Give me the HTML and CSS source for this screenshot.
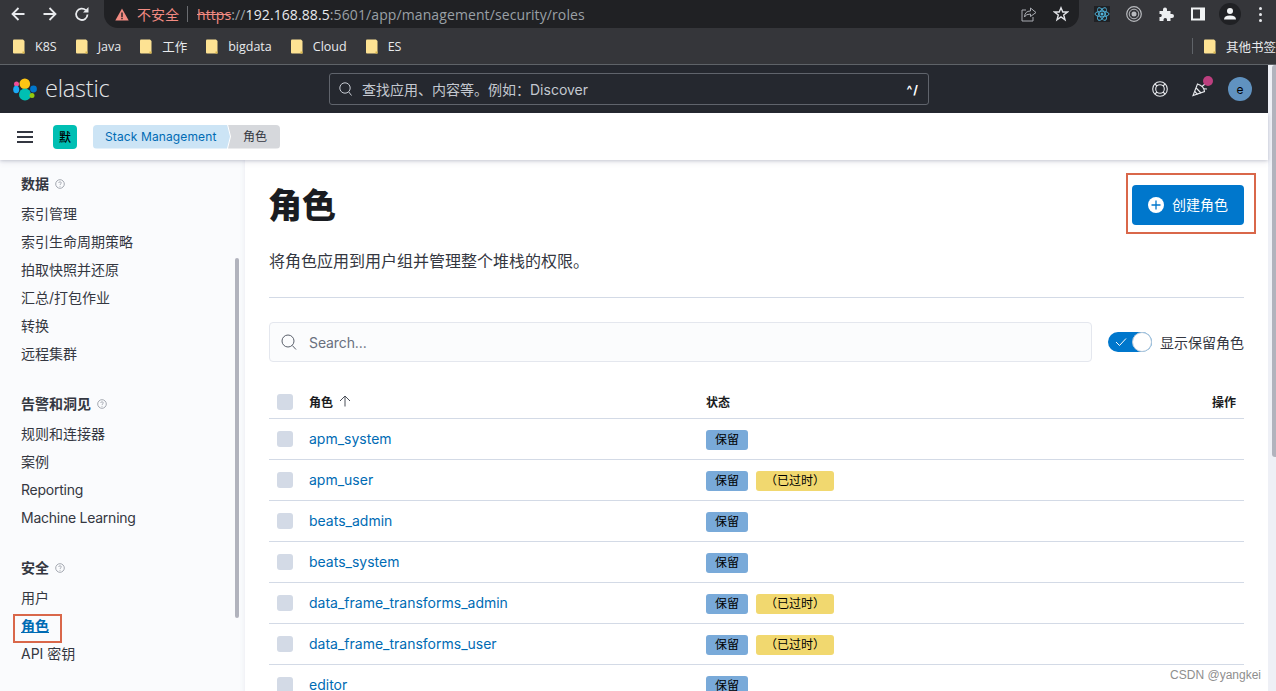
FILE: index.html
```html
<!DOCTYPE html>
<html lang="zh">
<head>
<meta charset="utf-8">
<title>角色 - Elastic</title>
<link rel="stylesheet" href="styles.css">
</head>
<body>
<svg class="defs" width="0" height="0" aria-hidden="true">
  <defs>
    <symbol id="folder" viewBox="0 0 12 15">
      <path d="M0 1.5Q0 .5 1 .5H10L11.5 2V14.5H1Q0 14.5 0 13.5Z" fill="#fde293"/>
      <path d="M9.5 14.5V12.5H11.500V14.5Z" fill="#d8b64a"/>
    </symbol>
    <symbol id="help" viewBox="0 0 10 10">
      <circle cx="5" cy="5" r="4.300" fill="none" stroke="#9a9ea8" stroke-width=".9"/>
      <path d="M3.700 4Q3.800 2.800 5 2.800T6.300 3.900C6.300 4.900 5 4.900 5 6" fill="none" stroke="#9a9ea8" stroke-width=".8"/>
      <circle cx="5" cy="7.200" r=".5" fill="#9a9ea8"/>
    </symbol>
  </defs>
</svg>

<div class="browser">
  <div class="toolbar">
    <svg class="tb-icon" viewBox="0 0 16 16"><path d="M14.500 8H2.500M8.500 2 2.500 8 8.500 14" fill="none" stroke="#e8eaed" stroke-width="1.800"/></svg>
    <svg class="tb-icon" viewBox="0 0 16 16"><path d="M1.500 8H13.500M7.500 2 13.500 8 7.500 14" fill="none" stroke="#e8eaed" stroke-width="1.800"/></svg>
    <svg class="tb-icon" viewBox="0 0 16 16"><path d="M13.500 8.500A5.700 5.700 0 1 1 11.800 4.200" fill="none" stroke="#e8eaed" stroke-width="1.800"/><path d="M9 6.500H14.500V1Z" fill="#e8eaed"/></svg>
    <div class="omnibox">
      <svg class="warn" viewBox="0 0 14 13"><path d="M7 .5 13.700 12.500H.3Z" fill="#f28b82"/><path d="M6.300 4.500H7.700V9H6.300ZM6.300 9.800H7.700V11.200H6.300Z" fill="#202124"/></svg>
      <span class="insecure">不安全</span>
      <span class="omni-sep"></span>
      <span class="url"><s class="scheme">https</s><span class="dim">://</span><span class="host">192.168.88.5</span><span class="dim">:5601/app/management/security/roles</span></span>
      <svg class="omni-share" viewBox="0 0 16 16"><path d="M9.500 2 15 6.500 9.500 10.500V8Q4.500 8 3.500 11 3.800 5 9.500 5ZM5 4H1V15H12V11" fill="none" stroke="#a9acb2" stroke-width="1"/></svg>
      <svg class="omni-star" viewBox="0 0 16 16"><path d="M8 1.800 9.800 6H14.500L10.700 8.900 12 13.700 8 10.900 4 13.700 5.300 8.900 1.500 6H6.200Z" fill="none" stroke="#e0e2e6" stroke-width="1.400"/></svg>
    </div>
    <div class="ext-group">
      <span class="ext-react"><svg viewBox="0 0 16 16"><g fill="none" stroke="#4fb4dc" stroke-width=".9"><ellipse cx="8" cy="8" rx="7" ry="2.800"/><ellipse cx="8" cy="8" rx="7" ry="2.800" transform="rotate(60 8 8)"/><ellipse cx="8" cy="8" rx="7" ry="2.800" transform="rotate(120 8 8)"/></g><circle cx="8" cy="8" r="1.500" fill="#4fb4dc"/></svg></span>
      <svg class="ext" viewBox="0 0 16 16"><g fill="none" stroke="#b9bbbf"><circle cx="8" cy="8" r="7.300" stroke-width="1.200"/><circle cx="8" cy="8" r="4.800" stroke-width="1"/></g><circle cx="8" cy="8" r="2.500" fill="#b9bbbf"/></svg>
      <svg class="ext" viewBox="0 0 16 16"><path d="M1.500 5H5V3.500A2 2 0 0 1 9 3.500V5H12.500V8H14A2 2 0 0 1 14 12H12.500V15H9V13.500A1.800 1.800 0 0 0 5.500 13.500V15H1.500V11H3A1.800 1.800 0 0 0 3 8H1.500Z" fill="#eceef0"/></svg>
      <svg class="ext" viewBox="0 0 16 16"><path d="M1 1.500H15V14.500H1ZM3 3.500V12.500H10V3.500Z" fill="#f1f3f4" fill-rule="evenodd"/></svg>
      <span class="profile"><svg viewBox="0 0 16 16"><circle cx="8" cy="5" r="3" fill="#f1f3f4"/><path d="M2 13.500Q2 9.500 8 9.500T14 13.500Z" fill="#f1f3f4"/></svg></span>
      <span class="kebab"><i></i><i></i><i></i></span>
    </div>
  </div>
  <div class="bookmarks">
    <span class="bm"><svg class="bm-icon"><use href="#folder"/></svg>K8S</span>
    <span class="bm"><svg class="bm-icon"><use href="#folder"/></svg>Java</span>
    <span class="bm"><svg class="bm-icon"><use href="#folder"/></svg>工作</span>
    <span class="bm"><svg class="bm-icon"><use href="#folder"/></svg>bigdata</span>
    <span class="bm"><svg class="bm-icon"><use href="#folder"/></svg>Cloud</span>
    <span class="bm"><svg class="bm-icon"><use href="#folder"/></svg>ES</span>
    <span class="bm-spacer"></span>
    <span class="bm-sep"></span>
    <span class="bm bm-other"><svg class="bm-icon"><use href="#folder"/></svg>其他书签</span>
  </div>
</div>

<div class="viewport">
  <div class="app">
    <header class="kbn-top">
      <div class="brand">
        <svg class="logo" viewBox="0 0 24 24">
          <circle cx="11.800" cy="6.700" r="5.300" fill="#fec514"/>
          <circle cx="12" cy="17.600" r="6" fill="#00bfb3"/>
          <circle cx="3.500" cy="7" r="2.500" fill="#f04e98"/>
          <ellipse cx="3.200" cy="12.500" rx="3" ry="3.800" fill="#1ba9f5"/>
          <ellipse cx="20.500" cy="12" rx="3.400" ry="3.400" fill="#0077cc"/>
          <circle cx="19" cy="18.500" r="2.500" fill="#93c90e"/>
        </svg>
        <span class="wordmark">elastic</span>
      </div>
      <div class="global-search">
        <svg class="gs-icon" viewBox="0 0 16 16"><circle cx="7" cy="7" r="5.200" fill="none" stroke="#c8ccd4" stroke-width="1"/><path d="M10.800 11 13.500 14.500" stroke="#c8ccd4" stroke-width="1"/></svg>
        <span class="gs-text">查找应用、内容等。例如：Discover</span>
        <span class="gs-key">^/</span>
      </div>
      <div class="top-actions">
        <svg class="ta-icon" viewBox="0 0 16 16"><g fill="none" stroke="#e8eaee" stroke-width="1.100"><circle cx="8" cy="8" r="7.300"/><circle cx="8" cy="8" r="4.300"/><path d="M2.800 2.800 5 5M13.200 2.800 11 5M2.800 13.200 5 11M13.200 13.200 11 11"/></g></svg>
        <span class="news">
          <svg class="ta-icon" viewBox="0 0 16 16"><g fill="none" stroke="#e8eaee" stroke-width="1.100"><path d="M5.500 3 1 14.500 12.500 10.500Q12 5 5.500 3Z"/><path d="M4.200 7 9 12M2.800 10.500 5.500 13.300M10 5.500 13 3M11.500 7.800 15 8"/></g></svg>
          <i class="news-dot"></i>
        </span>
        <span class="avatar">e</span>
      </div>
    </header>

    <div class="kbn-sub">
      <span class="burger"><i></i><i></i><i></i></span>
      <span class="space">默</span>
      <nav class="crumbs">
        <a class="crumb crumb-link">Stack Management</a>
        <span class="crumb crumb-current">角色</span>
      </nav>
    </div>

    <div class="body-row">
      <aside class="side">
        <div class="side-scroll"><i class="side-thumb"></i></div>
        <div class="side-inner">
          <section class="side-group">
            <h3 class="side-title">数据<svg class="help"><use href="#help"/></svg></h3>
            <a class="side-link">索引管理</a>
            <a class="side-link">索引生命周期策略</a>
            <a class="side-link">拍取快照并还原</a>
            <a class="side-link">汇总/打包作业</a>
            <a class="side-link">转换</a>
            <a class="side-link">远程集群</a>
          </section>
          <section class="side-group">
            <h3 class="side-title">告警和洞见<svg class="help"><use href="#help"/></svg></h3>
            <a class="side-link">规则和连接器</a>
            <a class="side-link">案例</a>
            <a class="side-link side-latin">Reporting</a>
            <a class="side-link side-latin">Machine Learning</a>
          </section>
          <section class="side-group">
            <h3 class="side-title">安全<svg class="help"><use href="#help"/></svg></h3>
            <a class="side-link">用户</a>
            <a class="side-link side-active">角色</a>
            <a class="side-link">API 密钥</a>
          </section>
        </div>
        <span class="mark mark-side"></span>
      </aside>

      <main class="content">
        <div class="page-head">
          <div>
            <h1 class="page-title">角色</h1>
            <p class="page-desc">将角色应用到用户组并管理整个堆栈的权限。</p>
          </div>
          <span class="create-wrap">
            <button class="create-btn" type="button">
              <svg class="plus" viewBox="0 0 16 16"><circle cx="8" cy="8" r="8" fill="#fff"/><path d="M8 3.500V12.500M3.500 8H12.500" stroke="#0077cc" stroke-width="1.300"/></svg>
              <span>创建角色</span>
            </button>
            <span class="mark mark-create"></span>
          </span>
        </div>
        <hr class="rule">
        <div class="filter-row">
          <div class="search-box">
            <svg class="search-icon" viewBox="0 0 16 16"><circle cx="7" cy="7" r="6" fill="none" stroke="#5a606b" stroke-width="1"/><path d="M11.300 11.500 15 15.500" stroke="#5a606b" stroke-width="1"/></svg>
            <span class="search-ph">Search...</span>
          </div>
          <label class="switch-wrap">
            <span class="switch">
              <svg class="switch-check" viewBox="0 0 12 10"><path d="M1 5 4.500 8.500 11 1.500" fill="none" stroke="#fff" stroke-width="1"/></svg>
              <i class="switch-knob"></i>
            </span>
            <span class="switch-label">显示保留角色</span>
          </label>
        </div>
        <div class="table">
          <div class="tr th">
            <span class="cb"></span>
            <span class="col-name"><b>角色</b><svg class="sort" viewBox="0 0 12 12"><path d="M6 11.500V1M1 6 6 1 11 6" fill="none" stroke="#4a4f58" stroke-width="1"/></svg></span>
            <span class="col-status"><b>状态</b></span>
            <span class="col-act"><b>操作</b></span>
          </div>
          <div class="tr"><span class="cb"></span><a class="col-name role">apm_system</a><span class="col-status"><span class="badge badge-blue">保留</span></span></div>
          <div class="tr"><span class="cb"></span><a class="col-name role">apm_user</a><span class="col-status"><span class="badge badge-blue">保留</span><span class="badge badge-yellow">（已过时）</span></span></div>
          <div class="tr"><span class="cb"></span><a class="col-name role">beats_admin</a><span class="col-status"><span class="badge badge-blue">保留</span></span></div>
          <div class="tr"><span class="cb"></span><a class="col-name role">beats_system</a><span class="col-status"><span class="badge badge-blue">保留</span></span></div>
          <div class="tr"><span class="cb"></span><a class="col-name role">data_frame_transforms_admin</a><span class="col-status"><span class="badge badge-blue">保留</span><span class="badge badge-yellow">（已过时）</span></span></div>
          <div class="tr"><span class="cb"></span><a class="col-name role">data_frame_transforms_user</a><span class="col-status"><span class="badge badge-blue">保留</span><span class="badge badge-yellow">（已过时）</span></span></div>
          <div class="tr"><span class="cb"></span><a class="col-name role">editor</a><span class="col-status"><span class="badge badge-blue">保留</span></span></div>
        </div>
        <span class="watermark">CSDN @yangkei</span>
      </main>
    </div>
  </div>
  <div class="page-scroll"><i class="page-thumb"></i></div>
</div>
</body>
</html>
```

FILE: styles.css
```css
* { box-sizing: border-box; }
html, body { margin: 0; height: 100%; overflow: hidden; }
body {
  display: flex;
  flex-direction: column;
  font-family: Inter, "Noto Sans CJK SC", "Liberation Sans", sans-serif;
  font-size: 14px;
  color: #343741;
  background: #fff;
}
.defs { position: absolute; }

/* browser chrome */
.browser { flex: none; background: #35363a; color: #e8eaed; }
.toolbar { height: 28px; display: flex; align-items: center; padding-left: 10px; gap: 16px; }
.tb-icon { width: 16px; height: 16px; flex: none; }
.omnibox {
  margin-left: -2px;
  width: 975px;
  height: 28px;
  background: #202124;
  border-radius: 0 0 14px 14px;
  display: flex;
  align-items: center;
  padding-left: 11px;
  flex: none;
}
.warn { width: 14px; height: 13px; flex: none; }
.insecure { margin-left: 8px; color: #f28b82; font-size: 14px; }
.omni-sep { width: 1px; height: 16px; background: #6a6c70; margin: 0 9px 0 8px; }
.url { font-size: 14px; letter-spacing: .1px; white-space: nowrap; font-family: "Open Sans", "Liberation Sans", sans-serif; }
.scheme { color: #f28b82; }
.host { color: #e8eaed; }
.dim { color: #9aa0a6; }
.omni-share { width: 16px; height: 16px; margin-left: auto; flex: none; }
.omni-star { width: 16px; height: 16px; margin: 0 10px 0 16px; flex: none; }
.ext-group { display: flex; align-items: center; flex: 1; margin-left: -1px; }
.ext-react { width: 16px; height: 16px; background: #202124; flex: none; display: flex; }
.ext-react svg { width: 16px; height: 16px; }
.ext { width: 16px; height: 16px; flex: none; margin-left: 16px; }
.profile { width: 22px; height: 22px; border-radius: 50%; background: #202124; margin-left: 13px; display: flex; align-items: center; justify-content: center; flex: none; }
.profile svg { width: 16px; height: 16px; }
.kebab { margin-left: 18px; display: flex; flex-direction: column; gap: 3px; }
.kebab i { width: 3px; height: 3px; border-radius: 50%; background: #e8eaed; display: block; }

.bookmarks {
  height: 37px;
  display: flex;
  align-items: center;
  padding: 0 0 0 13px;
  border-bottom: 1px solid #5f6368;
  font-family: "Open Sans", "Noto Sans CJK SC", sans-serif;
  font-size: 12.500px;
}
.bm { display: flex; align-items: center; white-space: nowrap; margin-right: 19px; }
.bm-icon { width: 12px; height: 15px; margin-right: 10px; flex: none; }
.bm-spacer { flex: 1; }
.bm-sep { width: 1px; height: 16px; background: #5f6368; margin-right: 11px; }
.bm-other { margin-right: 0; width: 72px; flex: none; }

/* viewport */
.viewport { flex: 1; min-height: 0; display: flex; }
.app { flex: 1; min-width: 0; display: flex; flex-direction: column; }
.page-scroll { width: 8px; flex: none; background: #eef0f6; position: relative; }
.page-thumb { position: absolute; top: 0; left: 4px; right: 0; height: 392px; background: #b1b3bd; border-radius: 3px 0 0 3px; }

.kbn-top {
  height: 48px;
  flex: none;
  background: #25282f;
  display: flex;
  align-items: center;
  padding: 0 16px 0 13px;
}
.brand { display: flex; align-items: center; width: 316px; flex: none; }
.logo { width: 24px; height: 24px; flex: none; }
.wordmark { margin-left: 8px; font: 300 23.500px/1 "Open Sans", sans-serif; color: #e5e7ea; letter-spacing: -.2px; }
.global-search {
  width: 600px;
  height: 32px;
  flex: none;
  border: 1px solid #60646c;
  border-radius: 3px;
  display: flex;
  align-items: center;
  padding: 0 9px 0 8px;
  color: #c4c8d0;
}
.gs-icon { width: 16px; height: 16px; flex: none; }
.gs-text { margin-left: 8px; flex: 1; font-size: 14px; white-space: nowrap; }
.gs-key { color: #fff; font-size: 12px; font-weight: 700; letter-spacing: 1px; }
.top-actions { margin-left: auto; display: flex; align-items: center; }
.ta-icon { width: 16px; height: 16px; display: block; }
.news { position: relative; margin-left: 24px; display: block; }
.news-dot { position: absolute; right: -5px; top: -5px; width: 10px; height: 10px; border-radius: 50%; background: #bd3f7f; }
.avatar {
  margin-left: 20px;
  width: 24px;
  height: 24px;
  border-radius: 50%;
  background: #6092c0;
  color: #000;
  font-size: 12px;
  display: flex;
  align-items: center;
  justify-content: center;
}

.kbn-sub {
  height: 47px;
  flex: none;
  background: #fff;
  display: flex;
  align-items: center;
  padding-left: 17px;
  box-shadow: 0 1px 3px rgba(60, 70, 100, .22), 0 3px 6px rgba(60, 70, 100, .08);
  position: relative;
  z-index: 2;
}
.burger { display: flex; flex-direction: column; gap: 3px; width: 16px; }
.burger i { display: block; height: 2px; background: #343741; }
.space {
  margin-left: 20px;
  width: 24px;
  height: 24px;
  border-radius: 4px;
  background: #00bfb3;
  color: #000;
  font-size: 12px;
  font-weight: 500;
  display: flex;
  align-items: center;
  justify-content: center;
}
.crumbs { margin-left: 16px; display: flex; font-size: 12px; line-height: 24px; }
.crumb { height: 24px; display: block; white-space: nowrap; }
.crumb-link {
  background: #cce4f5;
  color: #006bb4;
  padding: 0 12px;
  letter-spacing: .12px;
  border-radius: 4px 0 0 4px;
  clip-path: polygon(0 0, calc(100% - 3px) 0, 100% 50%, calc(100% - 3px) 100%, 0 100%);
  width: 137px;
}
.crumb-current {
  background: #d6d8dc;
  color: #343741;
  padding: 0 12px 0 15px;
  border-radius: 0 4px 4px 0;
  margin-left: -2px;
  width: 52px;
  clip-path: polygon(0 0, 100% 0, 100% 100%, 0 100%, 3px 50%);
}

.body-row { flex: 1; min-height: 0; display: flex; }
.side {
  width: 245px;
  flex: none;
  background: #fafbfd;
  position: relative;
  box-shadow: inset -4px 0 5px -4px rgba(100, 110, 140, .12);
}
.side-inner { padding: 10px 0 0 21px; }
.side-group { margin-bottom: 22px; }
.side-title {
  margin: 0 0 2px;
  height: 28px;
  font-size: 14px;
  font-weight: 700;
  line-height: 28px;
  display: flex;
  align-items: center;
  color: #343741;
}
.help { width: 10px; height: 10px; margin-left: 6px; flex: none; }
.side-link { display: block; height: 28px; line-height: 28px; font-size: 14px; color: #343741; white-space: nowrap; }
.side-latin { letter-spacing: -.25px; }
.side-active { color: #006bb4; font-weight: 700; text-decoration: underline; }
.side-scroll { position: absolute; left: 235px; top: 0; bottom: 0; width: 4px; }
.side-thumb { position: absolute; top: 98px; height: 360px; left: 0; right: 0; background: #b1b3bd; border-radius: 3px; }

.mark { position: absolute; border: 2px solid #d9674a; pointer-events: none; }
.mark-side { left: 13px; top: 454px; width: 49px; height: 29px; }
.mark-create { left: -6px; top: -12px; width: 130px; height: 61px; }

.content { flex: 1; min-width: 0; padding: 0 24px; background: #fff; position: relative; overflow: hidden; }
.page-head { display: flex; justify-content: space-between; align-items: flex-start; padding-top: 25px; }
.page-title { margin: 0 0 0 -1px; font-size: 34px; line-height: 42px; font-weight: 900; color: #1a1c21; }
.page-desc { margin: 24px 0 1px; font-size: 16px; line-height: 20px; color: #343741; }
.create-wrap { position: relative; display: block; }
.create-btn {
  width: 112px;
  height: 40px;
  border: 0;
  border-radius: 4px;
  background: #0077cc;
  color: #fff;
  font: 14px Inter, "Noto Sans CJK SC", sans-serif;
  display: flex;
  align-items: center;
  padding: 0 0 3px 16px;
  gap: 8px;
}
.plus { width: 16px; height: 16px; flex: none; margin-top: 2px; }
.rule { margin: 25px 0 24px; border: 0; height: 1px; background: #d3dae6; }
.filter-row { display: flex; align-items: center; height: 40px; }
.search-box {
  flex: 1;
  height: 40px;
  border: 1px solid #e4e7ee;
  border-radius: 4px;
  background: #fbfcfd;
  display: flex;
  align-items: center;
  padding-left: 11px;
}
.search-icon { width: 16px; height: 16px; flex: none; }
.search-ph { margin-left: 12px; color: #69707d; font-size: 14px; letter-spacing: -.1px; }
.switch-wrap { margin-left: 16px; display: flex; align-items: center; }
.switch { width: 44px; height: 20px; border-radius: 10px; background: #0077cc; position: relative; display: block; flex: none; }
.switch-check { position: absolute; left: 7px; top: 5px; width: 12px; height: 10px; }
.switch-knob { position: absolute; right: 0; top: 0; width: 20px; height: 20px; border-radius: 50%; background: #fff; border: 1px solid #b7c9da; }
.switch-label { margin-left: 8px; font-size: 14px; color: #343741; white-space: nowrap; }

.table { margin-top: 24px; }
.tr { height: 41px; display: flex; align-items: center; border-bottom: 1px solid #d3dae6; font-size: 13px; }
.th { height: 33px; font-size: 12px; color: #1a1c21; }
.th b { font-weight: 700; }
.th .col-name, .th .col-status, .th .col-act { margin-bottom: 2px; }
.cb { width: 16px; height: 16px; border-radius: 3px; background: #d3dae6; flex: none; margin-left: 8px; }
.col-name { width: 397px; margin-left: 16px; flex: none; display: flex; align-items: center; white-space: nowrap; }
.role { color: #006bb4; font-size: 14px; padding-bottom: 1px; }
.sort { width: 12px; height: 12px; margin-left: 6px; }
.col-status { display: flex; align-items: center; gap: 8px; }
.col-act { margin-left: auto; padding-right: 8px; }
.badge { height: 20px; line-height: 20px; border-radius: 3px; font-size: 12px; color: #000; white-space: nowrap; display: block; text-align: center; margin-top: 2px; }
.badge-blue { width: 42px; background: #79aad9; }
.badge-yellow { width: 78px; background: #f1d86f; }
.watermark { position: absolute; right: 7px; bottom: 9px; font: 12px "Liberation Sans", sans-serif; color: #8e8e8e; }
```
